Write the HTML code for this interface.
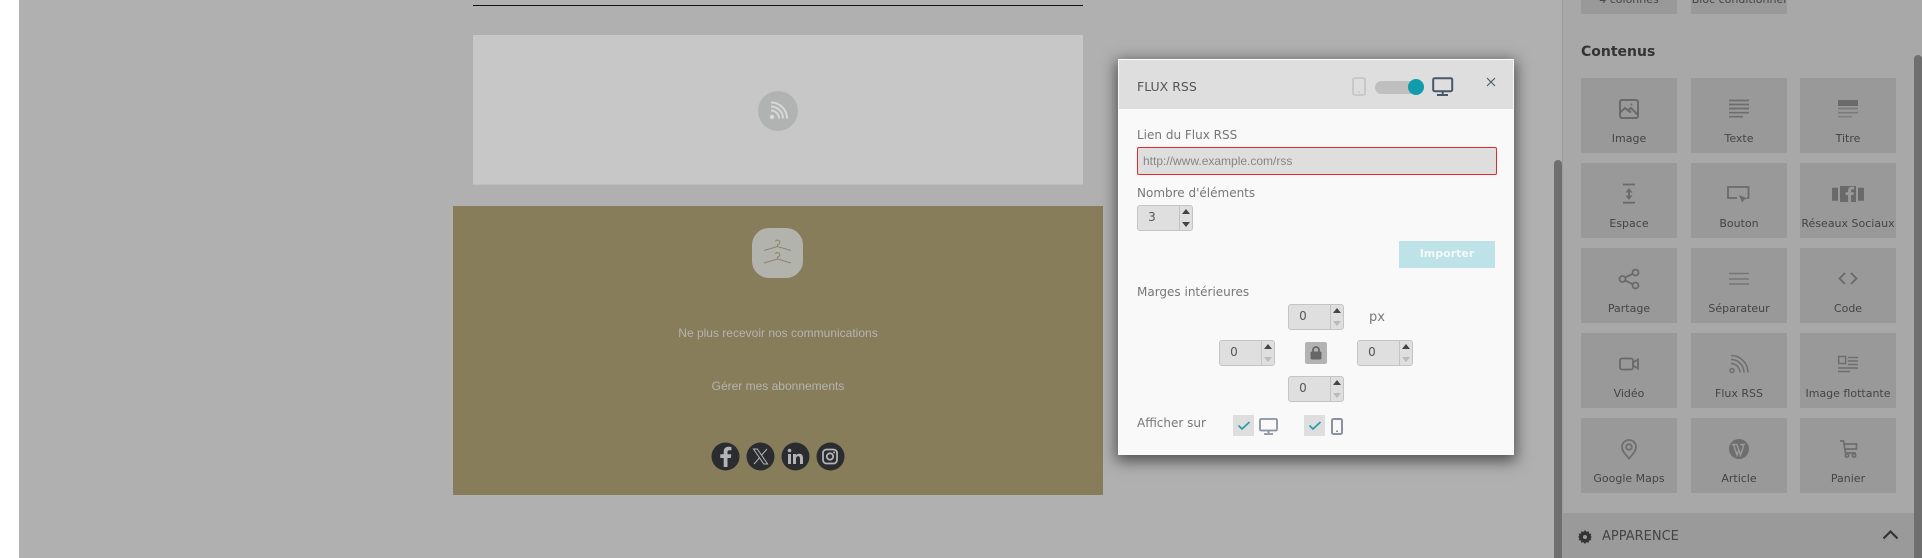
<!DOCTYPE html>
<html><head><meta charset="utf-8">
<style>
html,body{margin:0;padding:0;width:1922px;height:558px;overflow:hidden;background:#fff}
*{box-sizing:border-box}
body{position:relative;font-family:"DejaVu Sans","Liberation Sans",sans-serif}
.a{position:absolute}
.t{position:absolute;background:#999}
.t span{position:absolute;left:-4px;right:-4px;top:54px;text-align:center;font-size:11px;line-height:14px;color:#444;white-space:nowrap}
.t svg{position:absolute;left:33px;top:16px}
.lb{position:absolute;font-size:12px;line-height:16px;color:#777;white-space:nowrap}
.sp{position:absolute;width:56px;height:26px;border:1px solid #c4c4c4;border-radius:3px;background:#dfdfdf;font-family:"DejaVu Sans",sans-serif;font-size:12px;color:#555;line-height:22px}
.sp i{position:absolute;left:41px;top:0;bottom:0;width:1px;background:#c4c4c4}
.sp b{position:absolute;left:44px;font-weight:normal;width:0;height:0;border-left:4px solid transparent;border-right:4px solid transparent}
.sp .u{top:3px;border-bottom:5px solid #444}
.sp .d{top:16px;border-top:5px solid #bbb}
.sp .d.k{border-top-color:#444}
.sp em{position:absolute;font-style:normal;left:0;width:28px;text-align:center}
</style></head>
<body>
<!-- page backdrop -->
<div class="a" style="left:19px;top:0;width:1544px;height:558px;background:#b0b0b0"></div>
<div class="a" style="left:473px;top:5px;width:610px;height:1px;background:#111"></div>
<div class="a" style="left:473px;top:35px;width:610px;height:150px;background:#c7c7c7;border-bottom:1px solid #bdbdbd"></div>
<div class="a" style="left:758px;top:91px;width:40px;height:40px;border-radius:50%;background:#b1b2b2"></div>
<svg class="a" style="left:768px;top:101px" width="20" height="20" viewBox="0 0 20 20" fill="none" stroke="#d8d8d8" stroke-width="2"><circle cx="4" cy="16" r="2.2" fill="#d8d8d8" stroke="none"/><path d="M3 9.500a8 8 0 0 1 8 8M3 5.500a12 12 0 0 1 12 12M3 1.500a16 16 0 0 1 16 16"/></svg>

<!-- footer -->
<div class="a" style="left:453px;top:206px;width:650px;height:289px;background:#887d5a"></div>
<div class="a" style="left:752px;top:228px;width:51px;height:50px;border-radius:17px;background:#b3b3ae"></div>
<svg class="a" style="left:762px;top:238px" width="31" height="30" viewBox="0 0 31 30" fill="none" stroke="#8d8468" stroke-width="1"><path d="M2 12.500 15.500 8.500 29 12.500M13.500 3.500a2.200 2.200 0 1 1 2 3v2"/><path d="M2 25 15.500 21 29 25M13.500 16a2.200 2.200 0 1 1 2 3v2"/></svg>
<div class="a" style="left:453px;top:325px;width:650px;text-align:center;font:12px/16px 'Liberation Sans',sans-serif;color:#b4b4b0">Ne plus recevoir nos communications</div>
<div class="a" style="left:453px;top:378px;width:650px;text-align:center;font:12px/16px 'Liberation Sans',sans-serif;color:#b4b4b0">Gérer mes abonnements</div>
<svg class="a" style="left:711px;top:442px" width="135" height="29" viewBox="0 0 135 29">
<g fill="#2a2c30"><circle cx="14.500" cy="14.500" r="14"/><circle cx="49.500" cy="14.500" r="14"/><circle cx="84.500" cy="14.500" r="14"/><circle cx="119.500" cy="14.500" r="14"/></g>
<path d="M16.500 25V16h3.300l.5-3.700h-3.800V10c0-1.100.4-1.800 1.900-1.800h2V4.900c-.4 0-1.600-.2-2.900-.2-2.900 0-4.800 1.800-4.800 4.900v2.700H9.300V16h3.400v9z" fill="#b4b4b4"/>
<path d="M42.500 7h3.800l10.300 15h-3.800zM56 7l-5.700 6.500M48.800 15.500 43 22" fill="none" stroke="#b4b4b4" stroke-width="1"/>
<path d="M77 12h3v10h-3zM82 12h2.900v1.400c.5-.9 1.600-1.700 3.200-1.700 3.100 0 3.900 2 3.900 4.800V22h-3v-4.900c0-1.300-.3-2.800-1.800-2.800-1.600 0-2.200 1.200-2.200 2.700v5H82z" fill="#b4b4b4"/><circle cx="78.500" cy="8.500" r="1.800" fill="#b4b4b4"/>
<rect x="112" y="7.500" width="14" height="14" rx="3.500" fill="none" stroke="#b4b4b4" stroke-width="1.800"/><circle cx="119" cy="14.500" r="3.200" fill="none" stroke="#b4b4b4" stroke-width="1.800"/><circle cx="123" cy="10.500" r="1" fill="#b4b4b4"/>
</svg>

<!-- sidebar -->
<div class="a" style="left:1554px;top:160px;width:8px;height:398px;background:#6f6f6f;border-radius:4px 4px 0 0"></div>
<div class="a" style="left:1562px;top:0;width:1px;height:558px;background:#9c9c9c"></div>
<div class="a" style="left:1563px;top:0;width:359px;height:558px;background:#a8a8a8"></div>
<div class="a" style="left:1914px;top:55px;width:8px;height:503px;background:#6f6f6f;border-radius:4px 4px 0 0"></div>

<div class="t" style="left:1581px;top:-61px;width:96px;height:75px"><span>4 colonnes</span></div>
<div class="t" style="left:1691px;top:-61px;width:96px;height:75px"><span>Bloc conditionnel</span></div>
<div class="a" style="left:1581px;top:43px;font-size:14px;font-weight:bold;line-height:18px;color:#333">Contenus</div>

<div class="t" style="left:1581px;top:78px;width:96px;height:75px"><svg width="30" height="30" viewBox="0 0 30 30" fill="none" stroke="#6a6a6a" stroke-width="2"><rect x="6" y="6" width="18" height="18" rx="2"/><path d="M6 18.500 11 14l6 4.500M13 17l4-3 7 7"/><circle cx="17.500" cy="10.500" r="1" fill="#6a6a6a" stroke="none"/></svg><span>Image</span></div>
<div class="t" style="left:1691px;top:78px;width:96px;height:75px"><svg width="30" height="30" viewBox="0 0 30 30" fill="none" stroke="#6e6e6e" stroke-width="1.700"><path d="M5 6.500h20M5 10.500h20M5 14.500h20M5 18.700h20M5 22.700h14"/></svg><span>Texte</span></div>
<div class="t" style="left:1800px;top:78px;width:96px;height:75px"><svg width="30" height="30" viewBox="0 0 30 30"><path d="M5 6h20v6H5z" fill="#6a6a6a"/><path d="M5 14.500h20M5 18.700h20" stroke="#7a7a7a" stroke-width="1.700"/><path d="M5 22.700h14" stroke="#808080" stroke-width="1.700"/></svg><span>Titre</span></div>

<div class="t" style="left:1581px;top:163px;width:96px;height:75px"><svg width="30" height="30" viewBox="0 0 30 30" fill="none" stroke="#6a6a6a" stroke-width="1.800"><path d="M9 5.500h12M9 23.700h12"/><path d="M15 11v8"/><path d="M11.500 13.500 15 9l3.500 4.500zM11.500 16.500 15 21l3.500-4.500z" fill="#6a6a6a" stroke="none"/></svg><span>Espace</span></div>
<div class="t" style="left:1691px;top:163px;width:96px;height:75px"><svg width="30" height="30" viewBox="0 0 30 30" fill="none" stroke="#6a6a6a" stroke-width="1.800"><path d="M13 19H4V8h20.500v11H23"/><path d="M15 16l8.500 3.500-3.500 1.200-1.800 3z" fill="#6a6a6a" stroke="none"/></svg><span>Bouton</span></div>
<div class="t" style="left:1800px;top:163px;width:96px;height:75px"><svg width="32" height="30" viewBox="0 0 32 30" fill="#6a6a6a" style="left:32px"><path d="M0 8.700h6v13H0zM26 8.700h6v13h-6z"/><path d="M8 7h16v16h-5v-7h2.500l.4-2.700H19v-1.600c0-.8.3-1.300 1.400-1.300h1.700V7.800c-.3 0-1.200-.1-2.200-.1-2.300 0-3.800 1.300-3.800 3.800v1.800h-2.500V16h2.500v7H8z"/></svg><span>Réseaux Sociaux</span></div>

<div class="t" style="left:1581px;top:248px;width:96px;height:75px"><svg width="30" height="30" viewBox="0 0 30 30" fill="none" stroke="#6a6a6a" stroke-width="1.800"><circle cx="8.500" cy="15" r="3"/><circle cx="21.500" cy="8.500" r="3"/><circle cx="21.500" cy="21.500" r="3"/><path d="M11 13.500l7.800-3.700M11 16.500l7.800 3.700"/></svg><span>Partage</span></div>
<div class="t" style="left:1691px;top:248px;width:96px;height:75px"><svg width="30" height="30" viewBox="0 0 30 30" stroke="#777" stroke-width="1.600"><path d="M5 9.500h20M5 15h20M5 20h20"/></svg><span>Séparateur</span></div>
<div class="t" style="left:1800px;top:248px;width:96px;height:75px"><svg width="30" height="30" viewBox="0 0 30 30" fill="none" stroke="#6a6a6a" stroke-width="1.800"><path d="M12 9 6.500 14.500 12 20M18 9l5.500 5.500L18 20"/></svg><span>Code</span></div>

<div class="t" style="left:1581px;top:333px;width:96px;height:75px"><svg width="30" height="30" viewBox="0 0 30 30" fill="none" stroke="#6a6a6a" stroke-width="1.800"><rect x="6" y="9.500" width="13" height="11" rx="2"/><path d="M19 13.500l5-3v9l-5-3z"/></svg><span>Vidéo</span></div>
<div class="t" style="left:1691px;top:333px;width:96px;height:75px"><svg width="30" height="30" viewBox="0 0 30 30" fill="none" stroke="#6e6e6e" stroke-width="1.500"><circle cx="8" cy="21.500" r="2"/><path d="M7 14.500a9 9 0 0 1 9 9M7 10.500a13 13 0 0 1 13 13M7 6.500a17 17 0 0 1 17 17"/></svg><span>Flux RSS</span></div>
<div class="t" style="left:1800px;top:333px;width:96px;height:75px"><svg width="30" height="30" viewBox="0 0 30 30" fill="none" stroke="#6e6e6e" stroke-width="1.500"><rect x="5.700" y="7.500" width="7" height="7"/><path d="M15 8.500h10M15 12h10M15 15.500h10M5 19h20M5 22.500h12"/></svg><span>Image flottante</span></div>

<div class="t" style="left:1581px;top:418px;width:96px;height:75px"><svg width="30" height="30" viewBox="0 0 30 30" fill="none" stroke="#6e6e6e" stroke-width="1.800"><path d="M15 24.500c-3.500-4-7-7.500-7-11.500a7 7 0 0 1 14 0c0 4-3.500 7.500-7 11.500z"/><circle cx="15" cy="13" r="2.800"/></svg><span>Google Maps</span></div>
<div class="t" style="left:1691px;top:418px;width:96px;height:75px"><svg width="30" height="30" viewBox="0 0 30 30"><circle cx="15" cy="15" r="10" fill="#6e6e6e"/><path d="M8 10.500h5.500M16 10.500h5M9.500 10.500 13 21l2-6M13 10.500 16.500 21l2.500-7c.6-1.600-.2-3-1-3.500" fill="none" stroke="#999" stroke-width="1.500"/></svg><span>Article</span></div>
<div class="t" style="left:1800px;top:418px;width:96px;height:75px"><svg width="30" height="30" viewBox="0 0 30 30" fill="none" stroke="#6e6e6e" stroke-width="1.700"><path d="M7 7h3.500l2 12h10.500M11 10h12.500v5H12"/><circle cx="14" cy="21.500" r="1.700"/><circle cx="21" cy="21.500" r="1.700"/></svg><span>Panier</span></div>

<div class="a" style="left:1563px;top:513px;width:351px;height:45px;background:#9a9a9a"></div>
<svg class="a" style="left:1578px;top:530px" width="14" height="14" viewBox="0 0 24 24"><path fill="#333" d="M12 0l2.500 3.200 3.700-1.200.7 3.900 3.900.7L21.600 10.300 24 12l-2.400 1.700 1.200 3.700-3.900.7-.7 3.900-3.700-1.200L12 24l-2.500-3.200-3.700 1.200-.7-3.900-3.900-.7 1.200-3.700L0 12l2.400-1.700L1.200 6.600l3.900-.7.700-3.900 3.700 1.200zM12 8.500a3.500 3.500 0 1 0 0 7 3.500 3.500 0 0 0 0-7z"/></svg>
<div class="a" style="left:1602px;top:528px;font-size:13px;line-height:17px;color:#444">APPARENCE</div>
<svg class="a" style="left:1882px;top:529px" width="17" height="11" viewBox="0 0 17 11" fill="none" stroke="#333" stroke-width="2.200"><path d="M1.500 9.500l7-7 7 7"/></svg>

<!-- modal -->
<div class="a" style="left:1118px;top:59px;width:396px;height:396px;background:#f9f9f9;box-shadow:0 4px 14px 2px rgba(0,0,0,.55);border-top:1px solid #fff">
  <div class="a" style="left:1px;top:0;width:394px;height:49px;background:#dedede"></div>
  <div class="lb" style="left:19px;top:19px;color:#555;font-size:12.500px">FLUX RSS</div>
  <svg class="a" style="left:234px;top:17px" width="14" height="19" viewBox="0 0 14 19" fill="none"><rect x="1" y="1" width="12" height="17" rx="2" stroke="#c6c6c6" stroke-width="1.800"/><rect x="6" y="14.500" width="2" height="1.500" fill="#c6c6c6"/></svg>
  <div class="a" style="left:257px;top:21px;width:44px;height:13px;border-radius:7px;background:#bfbfbf"></div>
  <div class="a" style="left:290px;top:19px;width:16px;height:16px;border-radius:50%;background:#109cad"></div>
  <svg class="a" style="left:314px;top:17px" width="22" height="20" viewBox="0 0 22 20" fill="none"><rect x="1.200" y="1.200" width="19" height="13" rx="1.500" stroke="#47586a" stroke-width="2"/><path d="M10.700 15v2.500" stroke="#47586a" stroke-width="2"/><path d="M5 18h11" stroke="#47586a" stroke-width="2"/></svg>
  <svg class="a" style="left:368px;top:17px" width="10" height="10" viewBox="0 0 10 10" stroke="#47586a" stroke-width="1.100"><path d="M1 1l8 8M9 1l-8 8"/></svg>

  <div class="lb" style="left:19px;top:67px">Lien du Flux RSS</div>
  <div class="a" style="left:19px;top:87px;width:360px;height:28px;background:#dedede;border:1px solid #e4282c;border-radius:2px;font:12px/26px 'Liberation Sans',sans-serif;color:#858585;padding-left:5px">http://www.example.com/rss</div>

  <div class="lb" style="left:19px;top:125px">Nombre d'éléments</div>
  <div class="sp" style="left:19px;top:145px"><em>3</em><i></i><b class="u"></b><b class="d k"></b></div>
  <div class="a" style="left:281px;top:181px;width:96px;height:27px;background:#bde2e7;color:#f4f8f8;font-size:11px;font-weight:bold;line-height:26px;text-align:center">Importer</div>

  <div class="lb" style="left:19px;top:224px">Marges intérieures</div>
  <div class="sp" style="left:170px;top:244px"><em>0</em><i></i><b class="u"></b><b class="d"></b></div>
  <div class="lb" style="left:251px;top:250px;font-size:13px">px</div>
  <div class="sp" style="left:101px;top:280px"><em>0</em><i></i><b class="u"></b><b class="d"></b></div>
  <div class="a" style="left:187px;top:282px;width:22px;height:22px;border-radius:2px;background:#b3b3b3"></div>
  <svg class="a" style="left:192px;top:286px" width="12" height="14" viewBox="0 0 12 14"><path d="M3 6V4a3 3 0 0 1 6 0v2" fill="none" stroke="#666" stroke-width="1.800"/><rect x=".5" y="5.500" width="11" height="8" rx="1.500" fill="#666"/></svg>
  <div class="sp" style="left:239px;top:280px"><em>0</em><i></i><b class="u"></b><b class="d"></b></div>
  <div class="sp" style="left:170px;top:316px"><em>0</em><i></i><b class="u"></b><b class="d"></b></div>

  <div class="lb" style="left:19px;top:355px">Afficher sur</div>
  <div class="a" style="left:115px;top:355px;width:21px;height:21px;background:#dedede"></div>
  <svg class="a" style="left:119px;top:360px" width="14" height="11" viewBox="0 0 14 11" fill="none" stroke="#2a9cae" stroke-width="1.700"><path d="M1.500 5.500l3.500 3.500 7.500-7"/></svg>
  <svg class="a" style="left:141px;top:358px" width="19" height="17" viewBox="0 0 19 17" fill="none" stroke="#8791a0" stroke-width="1.800"><rect x="1" y="1" width="17" height="11.500" rx="1.200"/><path d="M9.500 13v2M5 16h9"/></svg>
  <div class="a" style="left:186px;top:355px;width:21px;height:21px;background:#dedede"></div>
  <svg class="a" style="left:190px;top:360px" width="14" height="11" viewBox="0 0 14 11" fill="none" stroke="#2a9cae" stroke-width="1.700"><path d="M1.500 5.500l3.500 3.500 7.500-7"/></svg>
  <svg class="a" style="left:213px;top:358px" width="12" height="17" viewBox="0 0 12 17" fill="none"><rect x="1" y="1" width="10" height="15" rx="1.500" stroke="#8791a0" stroke-width="2"/><rect x="5" y="12.500" width="2" height="1.500" fill="#8791a0"/></svg>
</div>
</body></html>
